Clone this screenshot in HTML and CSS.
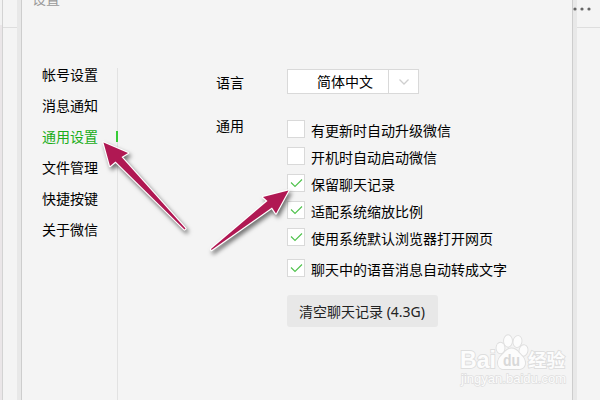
FILE: index.html
```
<!DOCTYPE html>
<html lang="zh-CN">
<head>
<meta charset="utf-8">
<title>设置</title>
<link rel="stylesheet" href="styles.css">
</head>
<body>
<div class="desktop">
  <aside class="edge-left"></aside>
  <div class="behind behind-left"></div>
  <main class="dialog">
    <h1 class="title">设置</h1>
    <div class="content">
      <nav class="nav">
        <a>帐号设置</a>
        <a>消息通知</a>
        <a class="active">通用设置</a>
        <a>文件管理</a>
        <a>快捷按键</a>
        <a>关于微信</a>
      </nav>
      <section class="settings">
        <div class="row language">
          <span class="label">语言</span>
          <div class="select">
            <span class="value">简体中文</span>
            <span class="drop"><svg width="12" height="8" viewBox="0 0 12 8"><path d="M1.500 1.500 6 6l4.500-4.500"/></svg></span>
          </div>
        </div>
        <div class="row general">
          <span class="label">通用</span>
          <div class="options">
            <div class="option"><i class="box"></i><span>有更新时自动升级微信</span></div>
            <div class="option"><i class="box"></i><span>开机时自动启动微信</span></div>
            <div class="option"><i class="box"><svg viewBox="0 0 16 16"><path d="m3 7.500 4 4 7-7"/></svg></i><span>保留聊天记录</span></div>
            <div class="option"><i class="box"><svg viewBox="0 0 16 16"><path d="m3 7.500 4 4 7-7"/></svg></i><span>适配系统缩放比例</span></div>
            <div class="option"><i class="box"><svg viewBox="0 0 16 16"><path d="m3 7.500 4 4 7-7"/></svg></i><span>使用系统默认浏览器打开网页</span></div>
            <div class="option voice"><i class="box"><svg viewBox="0 0 16 16"><path d="m3 7.500 4 4 7-7"/></svg></i><span>聊天中的语音消息自动转成文字</span></div>
            <button class="clear">清空聊天记录 (4.3G)</button>
          </div>
        </div>
      </section>
    </div>
  </main>
  <div class="behind behind-right"><svg class="more" width="18" height="4" viewBox="0 0 18 4"><circle cx="2" cy="2" r="1.600"/><circle cx="9" cy="2" r="1.600"/><circle cx="16" cy="2" r="1.600"/></svg></div>
  <svg class="arrows" width="600" height="400" viewBox="0 0 600 400">
    <path d="M103.500 142.500 128 153 121.500 157 185.500 228.500 184.500 229.500 115.500 161.500 110 166Z"/>
    <path d="M288.500 190.500 276 213.500 272 207.500 211.500 250 211 249 267.500 201 263 197Z"/>
  </svg>
  <svg class="watermark" width="120" height="64" viewBox="452 330 120 64">
    <g class="paw">
      <ellipse cx="500.500" cy="348" rx="4" ry="5.300"/>
      <ellipse cx="508" cy="341" rx="4" ry="5.800"/>
      <ellipse cx="517.500" cy="341.500" rx="4" ry="5.500" transform="rotate(12 517.500 341.500)"/>
      <ellipse cx="523.500" cy="350.500" rx="4" ry="5.300" transform="rotate(12 523.500 350.500)"/>
      <path d="M504 353c4-6 11-6 15 0 3 3 6 5 6 10 0 5-4 6.500-8 6h-11c-5 .500-8-1-8-6s3-7 6-10Z"/>
    </g>
    <text class="brand" x="460" y="368" textLength="36" lengthAdjust="spacingAndGlyphs">Bai</text>
    <text class="du" x="503" y="366" textLength="17" lengthAdjust="spacingAndGlyphs">du</text>
    <text class="exp" x="528" y="367" textLength="37">经验</text>
    <text class="url" x="461" y="382.500" textLength="105" lengthAdjust="spacingAndGlyphs">jingyan.baidu.com</text>
  </svg>
</div>
</body>
</html>
```
FILE: styles.css
```
* { box-sizing: border-box; }
body {
  margin: 0;
  background: #f4f4f4;
  color: #000;
  font: 14px/20px "Noto Sans CJK SC", "Noto Sans", sans-serif;
}
.desktop {
  position: relative;
  display: flex;
  width: 600px;
  height: 400px;
  overflow: hidden;
}
.edge-left {
  width: 3px;
  border-right: 1px solid #d3d3d3;
  background: linear-gradient(#f2f2f2 25px, #eae6e8 25px);
}
.behind { background: linear-gradient(#dedede, #dedede) 0 27px / 100% 1px no-repeat; }
.behind-left { width: 18px; border-right: 4px solid #e8e8e8; }
.behind-right { width: 27px; border-left: 4px solid #e8e8e8; }
.more { display: block; margin: 7px 0 0 -4px; fill: #666; overflow: visible; }
.dialog {
  width: 552px;
  border: solid #cdcdcd;
  border-width: 0 1px;
  background: #f4f4f4;
}
.title {
  height: 20px;
  margin: -12px 0 0 10px;
  color: #999;
  font-size: 14px;
  font-weight: 400;
  line-height: 20px;
}
.content { display: flex; padding-top: 60px; }
.nav {
  display: flex;
  flex-direction: column;
  gap: 11px;
  width: 96px;
  height: 332px;
  padding-left: 20px;
  border-right: 1px solid #e2e2e2;
}
.nav a { position: relative; top: -3px; height: 20px; line-height: 18px; }
.nav .active { color: #1aad19; }
.nav .active::after {
  position: absolute;
  top: 4px;
  right: -1px;
  width: 2px;
  height: 11px;
  background: #37cc37;
  content: "";
}
.settings { padding-top: 1px; padding-left: 98px; }
.row { display: flex; }
.label { width: 71px; }
.language .label { padding-top: 3px; }
.select {
  display: flex;
  width: 132px;
  height: 25px;
  border: 1px solid #d9d9d9;
  background: #fff;
}
.value { width: 100px; padding-left: 29px; line-height: 23px; }
.drop { display: grid; flex: 1; place-items: center; border-left: 1px solid #d9d9d9; }
.drop svg { fill: none; stroke: #cfcfcf; stroke-width: 1.3; }
.general { margin-top: 26px; }
.general .label { margin-top: -5px; }
.option { display: flex; height: 18px; margin-bottom: 9px; }
.option span { padding: 1px 0 0 6px; white-space: nowrap; line-height: 18px; }
.voice { margin-top: 13px; }
.box { width: 18px; height: 18px; border: 1px solid #d9d9d9; background: #fff; }
.box svg { display: block; width: 16px; height: 16px; fill: none; stroke: #4fc24c; stroke-width: 1.1; }
.clear {
  display: block;
  width: 151px;
  height: 32px;
  margin-top: 18px;
  padding: 1px 1px 0 0;
  border: 0;
  border-radius: 3px;
  background: #e8e8e8;
  color: #222;
  font: 14px/20px "Noto Sans", "Noto Sans CJK SC", sans-serif;
}
.arrows { position: absolute; inset: 0; filter: drop-shadow(2px 3px 2px #0008); }
.arrows path { fill: #b01853; stroke: #fff; stroke-width: 2.4; stroke-linejoin: round; paint-order: stroke; }
.watermark { position: absolute; left: 452px; top: 330px; }
.watermark text, .paw { fill: #fcfcfc; stroke: #dedede; stroke-width: 1.8; paint-order: stroke; }
.watermark text { font-family: "Liberation Sans", sans-serif; font-weight: 700; }
.watermark .brand { font-size: 24px; }
.watermark .du { fill: #d8d8d8; stroke: none; font-size: 16px; }
.watermark .exp { font-family: "Noto Sans CJK SC", sans-serif; font-size: 18.500px; }
.watermark .url { font-size: 13px; font-weight: 400; stroke-width: 1.4; }
```
